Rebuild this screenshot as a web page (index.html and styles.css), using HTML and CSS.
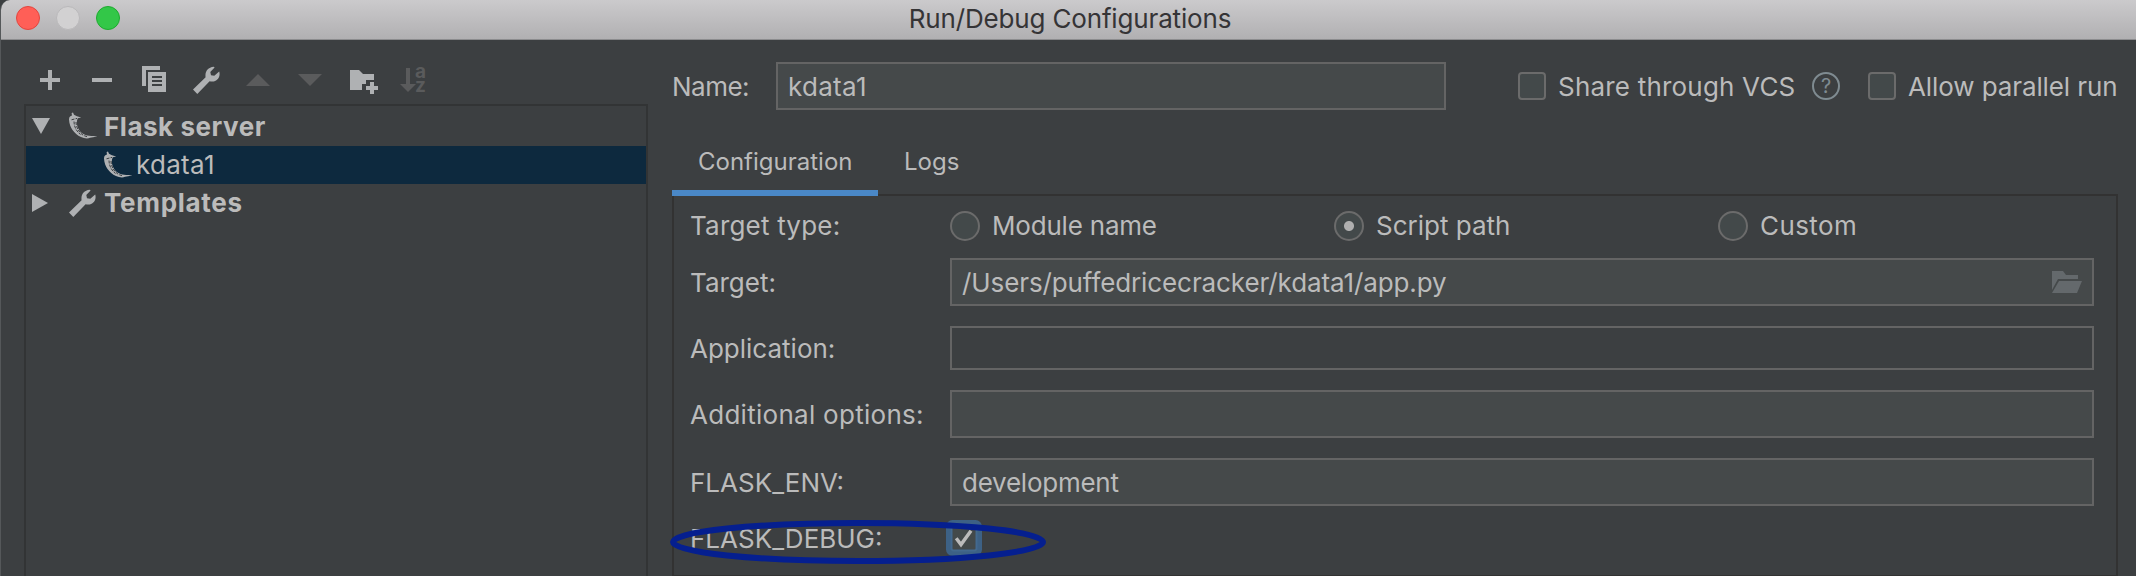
FILE: index.html
```html
<!DOCTYPE html>
<html lang="en">
<head>
<meta charset="utf-8">
<title>Run/Debug Configurations</title>
<link rel="stylesheet" href="styles.css">
</head>
<body>
<svg class="defs" width="0" height="0">
  <symbol id="wrench" viewBox="0 0 28 28">
    <path d="M1 23.5 13.6 11.2C12.7 6.2 15.6 1.3 21.8 .8L22.6 1.4 18.3 5.9 19 9.2 22.3 9.8 27.2 5.4C29 11.5 24.5 17 17.6 15.3L5.3 28Z"/>
  </symbol>
  <symbol id="flask" viewBox="0 0 30 28">
    <path class="pepper" d="M1 7.500C1 4.500 2.200 4 4 3.400L3.600 1 5 .5 6 2.800 9 4.200 13.200 5.500 9.800 6.200 9 8.500C8.400 13 10 18 14.500 21.600 18 24.200 24 24 29.500 24.400L22 25.700C20 27 16 26.500 13 25 6 21.700 1.500 15.500 1 7.500Z"/>
    <path class="pepper-cut" d="M3.500 7.800 9 6.400M6 9.500C6 14 8 19 12.500 22.500M8 10C8 15 10.500 20 15.500 23.500L19 24.600"/>
  </symbol>
</svg>
<div class="window">
  <header class="titlebar">
    <div class="lights"><i class="light red"></i><i class="light gray"></i><i class="light green"></i></div>
    <h1 class="title">Run/Debug Configurations</h1>
  </header>
  <main class="content">
    <aside class="sidebar">
      <div class="toolbar">
        <svg class="tool" viewBox="0 0 32 32"><path d="M6 14h8V6h4v8h8v4h-8v8h-4v-8H6z"/></svg>
        <svg class="tool" viewBox="0 0 32 32"><path d="M6 14h20v4H6z"/></svg>
        <svg class="tool" viewBox="0 0 32 32"><path d="M4 2h18v4H8v16H4z"/><path fill-rule="evenodd" d="M10 8h18v20H10zm4 4v2h10v-2zm0 4v2h10v-2zm0 4v2h10v-2z"/></svg>
        <svg class="tool" viewBox="0 0 32 32"><use href="#wrench" x="2" y="2" width="28" height="28"/></svg>
        <svg class="tool off" viewBox="0 0 32 32"><path d="M4 22 16 10 28 22z"/></svg>
        <svg class="tool off" viewBox="0 0 32 32"><path d="M4 10h24L16 22z"/></svg>
        <svg class="tool" viewBox="0 0 32 32"><path d="M4 6h9l4 4h11v6h-8v4h-4v6H4z"/><path d="M24 18h4v4h4v4h-4v4h-4v-4h-4v-4h4z"/></svg>
        <svg class="tool off" viewBox="0 0 32 32"><path d="M8 4h4v16h6l-8 8-8-8h6z"/><text class="az" x="17" y="14">a</text><text class="az" x="17" y="28">z</text></svg>
      </div>
      <div class="tree">
        <div class="node first">
          <svg class="arrow" viewBox="0 0 20 20"><path d="M1 2h18l-9 16z"/></svg>
          <svg class="node-icon"><use href="#flask" width="30" height="28"/></svg>
          <b class="t-flask">Flask server</b>
        </div>
        <div class="node child selected">
          <svg class="node-icon"><use href="#flask" width="30" height="28"/></svg>
          <span class="t-kdata">kdata1</span>
        </div>
        <div class="node">
          <svg class="arrow" viewBox="0 0 20 20"><path d="M1 1v18l16-9z"/></svg>
          <svg class="node-icon"><use href="#wrench" width="28" height="28"/></svg>
          <b class="t-templates">Templates</b>
        </div>
      </div>
    </aside>
    <section class="editor">
      <div class="name-row">
        <label class="t-name">Name:</label>
        <div class="field name-field"><span class="t-kdata">kdata1</span></div>
        <i class="check"></i><span class="t-share">Share through VCS</span>
        <svg class="help" viewBox="0 0 28 28"><circle cx="14" cy="14" r="13"/><text x="14" y="21">?</text></svg>
        <i class="check"></i><span class="t-allow">Allow parallel run</span>
      </div>
      <nav class="tabs">
        <div class="tab active"><span>Configuration</span></div>
        <div class="tab"><span>Logs</span></div>
      </nav>
      <div class="panel">
        <div class="row types">
          <label class="t-type">Target type:</label>
          <div class="option"><i class="radio"></i><span class="t-module">Module name</span></div>
          <div class="option"><i class="radio on"></i><span>Script path</span></div>
          <div class="option"><i class="radio"></i><span class="t-custom">Custom</span></div>
        </div>
        <div class="row target">
          <label>Target:</label>
          <div class="field"><span class="t-path">/Users/puffedricecracker/kdata1/app.py</span>
            <svg class="folder" viewBox="0 0 30 22"><path d="M0 0h11l3 4h12v4H6L0 19z"/><path d="M7 10h23l-5 12H0z"/></svg>
          </div>
        </div>
        <div class="row application"><label>Application:</label><div class="field flat"></div></div>
        <div class="row additional"><label class="t-add">Additional options:</label><div class="field"></div></div>
        <div class="row env"><label>FLASK_ENV:</label><div class="field"><span class="t-dev">development</span></div></div>
        <div class="row debug">
          <label>FLASK_DEBUG:</label>
          <svg class="checked" viewBox="0 0 36 36"><rect class="glow" x="2.500" y="2.500" width="31" height="31" rx="4"/><rect class="edge" x="5.500" y="5.500" width="25" height="25" rx="2"/><path d="M10.200 18.300 15 24.500 25 10.700"/></svg>
          <svg class="mark" viewBox="0 0 376 44"><ellipse cx="188" cy="22" rx="185" ry="19"/></svg>
        </div>
      </div>
    </section>
  </main>
</div>
</body>
</html>
```
FILE: styles.css
```css
* { box-sizing: border-box; }
body {
  margin: 0;
  width: 2136px;
  height: 576px;
  overflow: hidden;
  background: #3c3f41;
  color: #bbbbbb;
  font: 26px/32px Inter, "Liberation Sans", sans-serif;
  white-space: nowrap;
}
.defs { position: absolute; }
.window { height: 576px; border-left: 1px solid #55585a; border-radius: 10px 0 0 0; overflow: hidden; }
.titlebar {
  position: relative;
  height: 40px;
  background: linear-gradient(#cbcacc, #b1b0b2);
  border-bottom: 1px solid #8c8c8e;
}
.lights { display: flex; gap: 16px; padding: 6px 0 0 15px; }
.light { width: 24px; height: 24px; border-radius: 50%; border: 1px solid; }
.red { background: #ff5f57; border-color: #e2463f; }
.gray { background: #d2d1d2; border-color: #b9b8ba; }
.green { background: #33c748; border-color: #1eab2f; }
.title {
  position: absolute;
  inset: 3px 0 auto 3px;
  margin: 0;
  text-align: center;
  font-size: 26px;
  font-weight: 400;
  letter-spacing: -.16px;
  color: #353436;
}
.content { display: flex; height: 536px; }
.sidebar { width: 624px; margin: 24px 0 0 23px; display: flex; flex-direction: column; }
.toolbar { display: flex; gap: 20px; height: 40px; padding-left: 10px; }
.tool { width: 32px; height: 32px; fill: #afb1b3; overflow: visible; }
.tool.off { fill: #5a5b5c; }
.az { font-size: 19px; font-weight: 700; }
.tree { flex: 1; border: 2px solid #323435; border-bottom: 0; }
.node { display: flex; align-items: center; height: 38px; padding-left: 5px; }
.node.first { height: 40px; }
.first b { padding-top: 2px; }
.node.child { padding-left: 77px; }
.selected { background: #0d293e; }
.arrow { width: 20px; height: 20px; margin-right: 17px; fill: #afb1b3; }
.node-icon { width: 30px; height: 28px; margin-right: 6px; fill: #afb1b3; }
.node b { font-weight: 700; }
.child .node-icon { margin-right: 3px; }
.pepper-cut { fill: none; stroke: #3c3f41; stroke-width: 1; stroke-dasharray: 3 1.200; }
.editor { width: 1447px; margin-left: 24px; display: flex; flex-direction: column; }
.name-row { display: flex; align-items: center; height: 48px; margin-top: 22px; }
.name-row > * { flex: none; }
.name-row > label, .name-row > span, .field > span { padding-top: 2px; }
.t-name { width: 104px; }
.field { display: flex; align-items: center; height: 48px; padding: 0 10px; background: #45494a; border: 2px solid #646464; }
.name-field { width: 670px; margin-right: 72px; }
.flat { background: #3c3f41; height: 44px; }
.check { width: 28px; height: 28px; margin-right: 12px; border: 2px solid #6b6b6b; border-radius: 4px; background: #43494a; }
.t-share { width: 254px; }
.help { width: 28px; height: 28px; margin-right: 28px; }
.help circle { fill: none; stroke: #7f8b91; stroke-width: 2; }
.help text { fill: #7f8b91; font-size: 20px; text-anchor: middle; }
.tabs { display: flex; height: 66px; margin-top: 20px; }
.tab { padding: 16px 26px 0; font-size: 24px; height: 66px; }
.tab.active { position: relative; width: 206px; border-bottom: 6px solid #4a88c7; z-index: 1; }
.panel { flex: 1; width: 1446px; margin-top: -2px; border: 2px solid #323232; border-bottom-width: 1px; padding-left: 16px; }
.row { display: grid; grid-template-columns: 260px 1144px; align-items: center; height: 48px; }
.row > label { padding-top: 2px; }
.types { grid-template-columns: 260px 384px 384px auto; height: 30px; margin-top: 14px; }
.types > label { padding-top: 0; }
.option { display: flex; align-items: center; gap: 12px; }
.radio { width: 30px; height: 30px; border: 2px solid #6b6b6b; border-radius: 50%; background: #43494a; }
.radio.on { background: radial-gradient(circle, #afafaf 4.500px, #43494a 5.500px); }
.target { margin-top: 18px; }
.folder { width: 30px; height: 22px; margin-left: auto; fill: #64696c; }
.application { margin-top: 20px; height: 44px; }
.additional { margin-top: 20px; }
.env { margin-top: 20px; }
.debug { position: relative; height: 36px; margin-top: 14px; }
.checked { width: 36px; height: 36px; margin-left: -4px; }
.glow { fill: #43494a; stroke: #3d6185; stroke-width: 5; }
.edge { fill: none; stroke: #43698e; stroke-width: 2; }
.checked path { fill: none; stroke: #bbbbbb; stroke-width: 3.500; }
.mark { position: absolute; left: -20px; top: 0; width: 376px; height: 44px; }
.mark ellipse { fill: none; stroke: #051f8f; stroke-width: 6; }

/* Tracking per label */
.t-flask { letter-spacing: .54px; }
.t-templates { letter-spacing: .7px; }
.t-kdata { letter-spacing: .3px; }
.t-name { letter-spacing: -.5px; }
.t-share { letter-spacing: .2px; }
.t-allow { letter-spacing: -.1px; }
.t-type { letter-spacing: .2px; }
.t-add { letter-spacing: .28px; }
.t-path { letter-spacing: -.1px; }
.t-dev { letter-spacing: -.25px; }
.t-module { letter-spacing: -.2px; }
.t-custom { letter-spacing: .4px; }
```
